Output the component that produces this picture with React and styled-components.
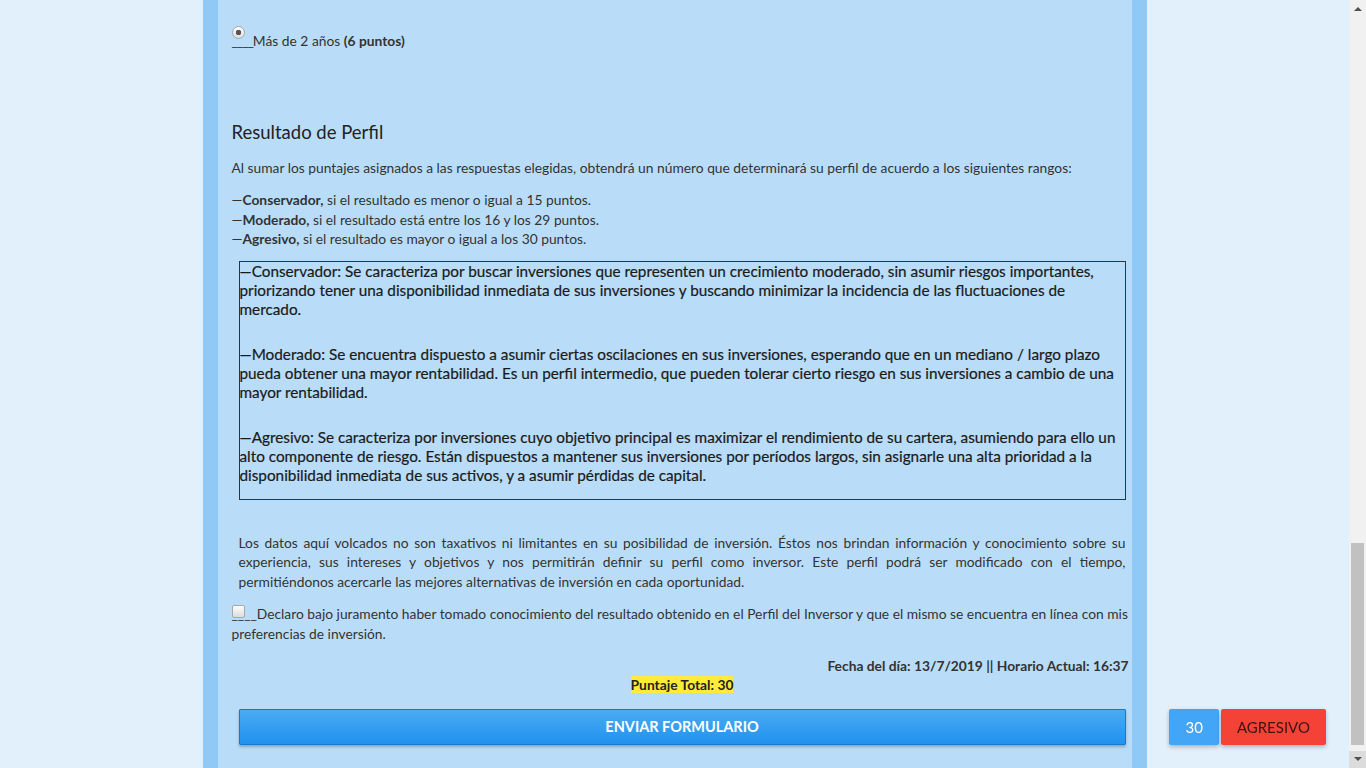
import React from "react";
import styled, { createGlobalStyle } from "styled-components";

const Global = createGlobalStyle`
  html, body { margin: 0; padding: 0; overflow: hidden; }
  body { font-family: Lato, "Open Sans", sans-serif; color: #333; }
  * { box-sizing: border-box; }
`;

const Page = styled.div`
  display: flex;
  width: 1366px;
  height: 768px;
  overflow: hidden;
  background: #e2f0fc;
`;

const Main = styled.div`
  flex: 1;
  display: flex;
  justify-content: center;
  height: 100%;
`;

const Column = styled.div`
  width: 944px;
  height: 100%;
  background: #b9ddf8;
  border-left: 15px solid #90c8f6;
  border-right: 15px solid #90c8f6;
  padding: 26px 0 0 14px;
  font-size: 13.8px;
  line-height: 19.5px;
`;

const Radio = styled.span`
  display: block;
  width: 13px;
  height: 13px;
  border-radius: 50%;
  border: 1px solid #a8a8a8;
  background: radial-gradient(circle at 50% 50%, #555 0 2.5px, transparent 3px),
    linear-gradient(#fdfdfd, #dedede);
`;

const Check = styled.span`
  display: inline-block;
  width: 13px;
  height: 13px;
  border-radius: 2px;
  border: 1px solid #a8a8a8;
  background: linear-gradient(#fdfdfd, #dcdcdc);
  vertical-align: top;
  margin-top: 1px;
  margin-right: -13px;
`;

const Blank = styled.span`
  letter-spacing: ${(p) => p.$ls || 0}px;
`;

const OptionText = styled.div`
  margin-top: -8px;
  b { font-weight: 700; }
`;

const Heading = styled.h3`
  margin: 69px 0 0;
  font-size: 18.5px;
  font-weight: 400;
  line-height: 24px;
  color: #222;
`;

const Para = styled.p`
  margin: ${(p) => p.$mt || 0}px 0 0;
`;

const List = styled.div`
  margin-top: 13px;
  b { font-weight: 700; }
`;

const Box = styled.div`
  margin: 12px 6px 0 7px;
  border: 1px solid #333;
  padding: 0;
  font-size: 15.3px;
  line-height: 19px;
  font-weight: 400;
  -webkit-text-stroke: 0.2px #1a1a1a;
  color: #1a1a1a;
  height: 239px;
`;

const BoxPara = styled.p`
  margin: 0;
  padding-top: ${(p) => p.$pt}px;
`;

const Disclaimer = styled.p`
  margin: 33px 6px 0 7px;
  text-align: justify;
`;

const Declare = styled.div`
  margin-top: 13px;
`;

const DateLine = styled.div`
  margin-top: 13px;
  text-align: right;
  padding-right: 3px;
  font-weight: 700;
`;

const TotalRow = styled.div`
  display: flex;
  justify-content: center;
  margin: 0 6px 0 7px;
  line-height: 17px;
`;

const Highlight = styled.span`
  background: #ffeb3b;
  font-weight: 700;
  color: #222;
`;

const Submit = styled.button`
  display: block;
  width: 887px;
  height: 36px;
  margin: 16px 0 0 7px;
  border: 1px solid #1c79c8;
  border-radius: 1px;
  background: linear-gradient(#4aabf2, #2092ee);
  box-shadow: 0 2px 3px rgba(0, 0, 0, 0.25);
  color: #fff;
  font-family: Lato, sans-serif;
  font-size: 14.5px;
  font-weight: 700;
`;

const Badges = styled.div`
  position: fixed;
  right: 40px;
  bottom: 23px;
  display: flex;
  gap: 2px;
`;

const Badge = styled.div`
  height: 36px;
  padding: 0 ${(p) => p.$px}px;
  display: flex;
  align-items: center;
  border-radius: 2px;
  background: ${(p) => p.$bg};
  color: ${(p) => p.$color};
  font-size: 15px;
  box-shadow: 0 2px 4px rgba(0, 0, 0, 0.25);
`;

const Scrollbar = styled.div`
  width: 17px;
  height: 100%;
  background: #f1f1f1;
  display: flex;
  flex-direction: column;
`;

const Arrow = styled.div`
  height: 17px;
  display: flex;
  align-items: center;
  justify-content: center;
  background: ${(p) => p.$bg || "transparent"};
`;

const Track = styled.div`
  flex: 1;
  display: flex;
  flex-direction: column;
  justify-content: flex-end;
  padding: 0 2px;
`;

const Thumb = styled.div`
  height: 202px;
  margin-bottom: 6px;
  background: #c1c1c1;
`;

export default function App() {
  return (
    <>
      <Global />
      <Page>
        <Main>
          <Column>
            <Radio />
            <OptionText>
              <Blank $ls={-1}>____</Blank>Más de 2 años <b>(6 puntos)</b>
            </OptionText>

            <Heading>Resultado de Perfil</Heading>
            <Para $mt={14}>
              Al sumar los puntajes asignados a las respuestas elegidas, obtendrá un número que determinará su perfil de acuerdo a los siguientes rangos:
            </Para>
            <List>
              —<b>Conservador,</b> si el resultado es menor o igual a 15 puntos.
              <br />—<b>Moderado,</b> si el resultado está entre los 16 y los 29 puntos.
              <br />—<b>Agresivo,</b> si el resultado es mayor o igual a los 30 puntos.
            </List>

            <Box>
              <BoxPara $pt={0}>
                —Conservador: Se caracteriza por buscar inversiones que representen un crecimiento moderado, sin asumir riesgos importantes, priorizando tener una disponibilidad inmediata de sus inversiones y buscando minimizar la incidencia de las fluctuaciones de mercado.
              </BoxPara>
              <BoxPara $pt={26}>
                —Moderado: Se encuentra dispuesto a asumir ciertas oscilaciones en sus inversiones, esperando que en un mediano / largo plazo pueda obtener una mayor rentabilidad. Es un perfil intermedio, que pueden tolerar cierto riesgo en sus inversiones a cambio de una mayor rentabilidad.
              </BoxPara>
              <BoxPara $pt={26}>
                —Agresivo: Se caracteriza por inversiones cuyo objetivo principal es maximizar el rendimiento de su cartera, asumiendo para ello un alto componente de riesgo. Están dispuestos a mantener sus inversiones por períodos largos, sin asignarle una alta prioridad a la disponibilidad inmediata de sus activos, y a asumir pérdidas de capital.
              </BoxPara>
            </Box>

            <Disclaimer>
              Los datos aquí volcados no son taxativos ni limitantes en su posibilidad de inversión. Éstos nos brindan información y conocimiento sobre su experiencia, sus intereses y objetivos y nos permitirán definir su perfil como inversor. Este perfil podrá ser modificado con el tiempo, permitiéndonos acercarle las mejores alternativas de inversión en cada oportunidad.
            </Disclaimer>

            <Declare>
              <Check />
              <Blank>____</Blank>Declaro bajo juramento haber tomado conocimiento del resultado obtenido en el Perfil del Inversor y que el mismo se encuentra en línea con mis preferencias de inversión.
            </Declare>

            <DateLine>Fecha del día: 13/7/2019 || Horario Actual: 16:37</DateLine>
            <TotalRow>
              <Highlight>Puntaje Total: 30</Highlight>
            </TotalRow>

            <Submit>ENVIAR FORMULARIO</Submit>
          </Column>
        </Main>
        <Scrollbar>
          <Arrow>
            <svg width="8" height="5" viewBox="0 0 8 5">
              <path d="M0 5 L4 1 L8 5 Z" fill="#505050" />
            </svg>
          </Arrow>
          <Track>
            <Thumb />
          </Track>
          <Arrow $bg="#dcdcdc">
            <svg width="8" height="5" viewBox="0 0 8 5">
              <path d="M0 0 L8 0 L4 4 Z" fill="#505050" />
            </svg>
          </Arrow>
        </Scrollbar>
        <Badges>
          <Badge $bg="#42a5f5" $color="#fff" $px={16}>30</Badge>
          <Badge $bg="#f44336" $color="#3b1414" $px={16}>AGRESIVO</Badge>
        </Badges>
      </Page>
    </>
  );
}
